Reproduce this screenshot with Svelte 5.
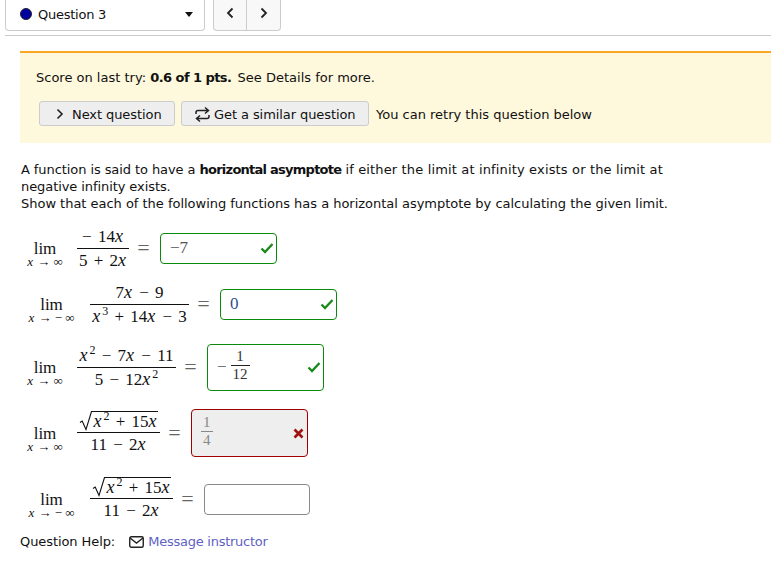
<script>
</script>

{#snippet lim(neg)}
	<div class="lim">
		<span class="lim-word">lim</span>
		<span class="lim-to"><i>x</i> → {#if neg}<span class="neg">−</span> {/if}∞</span>
	</div>
{/snippet}

{#snippet frac(top, bottom)}
	<span class="frac">
		<span class="num">{@render top()}</span>
		<span class="den">{@render bottom()}</span>
	</span>
{/snippet}

{#snippet sqrtTop()}
	<span class="sqrt">
		<svg width="14" height="20" viewBox="0 0 14 20"><path d="M1 11.5 L3.2 10 L7 18.5 L12.5 0.5 L14 0.5" fill="none" stroke="#111" stroke-width="1.1" /></svg>
		<span class="radicand"><i>x</i><sup>2</sup> + 15<i>x</i></span>
	</span>
{/snippet}

{#snippet check()}
	<svg class="mark" width="14" height="12" viewBox="0 0 14 12"><path d="M1.5 6.5 L5 10 L12.5 2" fill="none" stroke="#1c8a1c" stroke-width="2.4" /></svg>
{/snippet}

<div class="page">
	<div class="topbar">
		<div class="select">
			<span class="dot"></span>
			<span class="qname">Question 3</span>
			<span class="caret"></span>
		</div>
		<div class="nav">
			<button class="nav-btn" aria-label="Previous">
				<svg width="8" height="12" viewBox="0 0 8 12"><path d="M6.5 1.5 L2 6 L6.5 10.5" fill="none" stroke="#222" stroke-width="1.8" /></svg>
			</button>
			<button class="nav-btn" aria-label="Next">
				<svg width="8" height="12" viewBox="0 0 8 12"><path d="M1.5 1.5 L6 6 L1.5 10.5" fill="none" stroke="#222" stroke-width="1.8" /></svg>
			</button>
		</div>
	</div>

	<div class="content">
		<div class="notice">
			<p class="score">Score on last try: <b>0.6 of 1 pts.</b> <span class="see">See Details for more.</span></p>
			<div class="actions">
				<button class="btn next">
					<svg width="8" height="12" viewBox="0 0 8 12"><path d="M1.5 1.5 L6 6 L1.5 10.5" fill="none" stroke="#222" stroke-width="1.6" /></svg>
					Next question
				</button>
				<button class="btn similar">
					<svg width="15" height="17" viewBox="0 0 15 17"><path d="M1 8 V6.5 Q1 4.5 3 4.5 H13 M10 1.5 L13.5 4.5 L10 7.5 M14 9 V10.5 Q14 12.5 12 12.5 H2 M5 9.5 L1.5 12.5 L5 15.5" fill="none" stroke="#222" stroke-width="1.5" /></svg>
					Get a similar question
				</button>
				<span class="retry">You can retry this question below</span>
			</div>
		</div>

		<p class="intro">
			A function is said to have a <b>horizontal asymptote</b> <span class="tail">if either the limit at infinity exists or the limit at</span><br />
			negative infinity exists.<br />
			<span class="last">Show that each of the following functions has a horizontal asymptote by calculating the given limit.</span>
		</p>

		<div class="problems">
			<div class="row r1">
				{@render lim(false)}
				{#snippet t1()}− 14<i>x</i>{/snippet}
				{#snippet b1()}5 + 2<i>x</i>{/snippet}
				{@render frac(t1, b1)}
				<span class="eq">=</span>
				<div class="answer ok">
					<span class="val">−7</span>
					{@render check()}
				</div>
			</div>

			<div class="row r2 wide">
				{@render lim(true)}
				{#snippet t2()}7<i>x</i> − 9{/snippet}
				{#snippet b2()}<i>x</i><sup>3</sup> + 14<i>x</i> − 3{/snippet}
				{@render frac(t2, b2)}
				<span class="eq">=</span>
				<div class="answer ok">
					<span class="val blue">0</span>
					{@render check()}
				</div>
			</div>

			<div class="row r3">
				{@render lim(false)}
				{#snippet t3()}<i>x</i><sup>2</sup> − 7<i>x</i> − 11{/snippet}
				{#snippet b3()}5 − 12<i>x</i><sup>2</sup>{/snippet}
				{@render frac(t3, b3)}
				<span class="eq">=</span>
				<div class="answer ok">
					<span class="val minus">−</span>
					<span class="small-frac"><span class="sn">1</span><span>12</span></span>
					{@render check()}
				</div>
			</div>

			<div class="row r4">
				{@render lim(false)}
				{#snippet b4()}11 − 2<i>x</i>{/snippet}
				{@render frac(sqrtTop, b4)}
				<span class="eq">=</span>
				<div class="answer bad">
					<span class="small-frac grey"><span class="sn">1</span><span>4</span></span>
					<svg class="mark" width="11" height="11" viewBox="0 0 11 11"><path d="M1.5 1.5 L9.5 9.5 M9.5 1.5 L1.5 9.5" stroke="#a01010" stroke-width="2.6" /></svg>
				</div>
			</div>

			<div class="row r5 wide">
				{@render lim(true)}
				{#snippet b5()}11 − 2<i>x</i>{/snippet}
				{@render frac(sqrtTop, b5)}
				<span class="eq">=</span>
				<div class="answer empty"></div>
			</div>
		</div>

		<div class="help">
			<span>Question Help:</span>
			<svg width="15" height="12" viewBox="0 0 15 12"><rect x="0.75" y="0.75" width="13.5" height="10.5" rx="1.5" fill="none" stroke="#222" stroke-width="1.4" /><path d="M1 2 L7.5 7 L14 2" fill="none" stroke="#222" stroke-width="1.4" /></svg>
			<span class="link">Message instructor</span>
		</div>
	</div>
</div>

<style>
	:global(body) {
		margin: 0;
		background: #fff;
	}

	.page {
		width: 771px;
		height: 562px;
		overflow: hidden;
		padding-left: 5px;
		box-sizing: border-box;
		font-family: 'DejaVu Sans', sans-serif;
		font-size: 13px;
		letter-spacing: -0.08px;
		color: #111;
	}

	.topbar {
		display: flex;
		gap: 8px;
		height: 35px;
		border-bottom: 1px solid #ccc;
		box-sizing: content-box;
	}

	.select {
		width: 200px;
		height: 31px;
		box-sizing: border-box;
		border: 1px solid #ccc;
		border-top: 0;
		border-radius: 0 0 4px 4px;
		display: flex;
		align-items: center;
		padding: 0 11px 2px 14px;
		gap: 6px;
	}

	.qname {
		letter-spacing: -0.25px;
	}

	.dot {
		width: 12px;
		height: 12px;
		border-radius: 50%;
		background: #00009c;
		border: 0.5px solid #223;
		box-sizing: border-box;
	}

	.caret {
		margin-left: auto;
		width: 0;
		height: 0;
		border-left: 4px solid transparent;
		border-right: 4px solid transparent;
		border-top: 5px solid #111;
	}

	.nav {
		display: flex;
		height: 31px;
	}

	.nav-btn {
		width: 34px;
		height: 31px;
		padding: 0 0 2px;
		background: #f8f8f8;
		border: 1px solid #ccc;
		border-top: 0;
		border-radius: 0 0 0 4px;
	}

	.nav-btn + .nav-btn {
		border-left: 0;
		border-radius: 0 0 4px 0;
	}

	.content {
		padding: 15px 0 0 15px;
	}

	.notice {
		height: 92px;
		box-sizing: border-box;
		background: #fef8dc;
		border-top: 2px solid #f9a825;
		padding: 16px 0 0 16px;
	}

	.score {
		margin: 0 0 15px;
		line-height: 17px;
		letter-spacing: 0;
	}

	.see {
		margin-left: 2px;
	}

	b {
		letter-spacing: -0.55px;
	}

	.actions {
		display: flex;
		align-items: center;
		gap: 6px;
		margin-left: 3px;
		padding-top: 1px;
	}

	.btn {
		height: 25px;
		box-sizing: border-box;
		background: #eee;
		border: 1px solid #ccc;
		border-radius: 3px;
		font: inherit;
		letter-spacing: inherit;
		color: inherit;
		display: flex;
		align-items: center;
		padding: 1px 0 0;
		margin-top: -1px;
	}

	.next {
		width: 136px;
		padding-left: 16px;
		gap: 8px;
	}

	.similar {
		width: 188px;
		padding-left: 13px;
		gap: 4px;
	}

	.retry {
		margin-left: 1px;
		letter-spacing: 0;
	}

	.intro {
		margin: 18px 0 0 1px;
		line-height: 17px;
		white-space: nowrap;
	}

	.intro b {
		letter-spacing: -0.75px;
	}

	.tail {
		letter-spacing: 0.15px;
	}

	.last {
		letter-spacing: -0.02px;
	}

	.problems {
		margin-top: 16px;
		padding-left: 7px;
		display: flex;
		flex-direction: column;
		gap: 15px;
		font-family: 'Liberation Serif', serif;
		font-size: 17px;
		letter-spacing: 0;
		word-spacing: 2px;
	}

	.row {
		display: flex;
		align-items: center;
	}

	i {
		font-size: 18px;
		margin-right: 1px;
	}

	.r1 { height: 40px; }
	.r2 { height: 42px; }
	.r3 { height: 54px; }
	.r4 { height: 48px; }
	.r5 { height: 54px; }

	.lim {
		display: flex;
		flex-direction: column;
		align-items: center;
		width: 36px;
		margin: 13px 14px 0 0;
	}

	.wide .lim {
		width: 49px;
	}

	.lim-word {
		font-size: 17px;
		line-height: 13px;
	}

	.lim-to {
		font-size: 13px;
		line-height: 13px;
		word-spacing: 0;
		white-space: nowrap;
	}

	.lim-to i {
		font-size: 13px;
	}

	.neg {
		margin-right: 3px;
	}

	.frac {
		display: inline-flex;
		flex-direction: column;
		align-items: center;
		white-space: nowrap;
	}

	.r1 .frac { width: 52px; }
	.r2 .frac { width: 99px; }
	.r3 .frac { width: 99px; }
	.r4 .frac { width: 83px; }
	.r5 .frac { width: 83px; }

	.num {
		padding-bottom: 1px;
		line-height: 20px;
		border-bottom: 1px solid #111;
		width: 100%;
		box-sizing: border-box;
		text-align: center;
	}

	.den {
		line-height: 20px;
		padding-top: 1px;
	}

	sup {
		font-size: 12px;
		line-height: 0;
		margin-left: 1px;
	}

	.sqrt {
		display: inline-flex;
		align-items: flex-start;
		justify-content: center;
		vertical-align: top;
	}

	.radicand {
		border-top: 1px solid #111;
		line-height: 19px;
	}

	.eq {
		width: 13px;
		text-align: center;
		margin: 0 10px 0 8px;
		color: #666;
		font-size: 22px;
		line-height: 1;
	}

	.answer {
		width: 117px;
		height: 31px;
		box-sizing: border-box;
		border-radius: 4px;
		display: flex;
		align-items: center;
		padding: 0 2px 0 9px;
		background: #fff;
	}

	.r3 .answer {
		height: 47px;
	}

	.ok {
		border: 1px solid #0a8a0a;
	}

	.bad {
		border: 1px solid #a00000;
		background: #eee;
		padding: 0 3px 0 10px;
	}

	.r4 .answer {
		height: 48px;
	}

	.empty {
		width: 106px;
		border: 1px solid #888;
	}

	.val {
		color: #555;
		font-size: 17px;
	}

	.blue {
		color: #2f4f8f;
	}

	.minus {
		margin-right: 4px;
	}

	.small-frac {
		display: inline-flex;
		flex-direction: column;
		align-items: center;
		font-size: 15px;
		line-height: 17px;
		color: #333;
		padding: 0 2px 3px;
	}

	.small-frac.grey {
		color: #888;
		margin-left: -1px;
	}

	.sn {
		border-bottom: 1px solid #222;
		width: calc(100% + 4px);
		text-align: center;
	}

	.grey .sn {
		border-bottom-color: #888;
	}

	.mark {
		margin-left: auto;
	}

	.help {
		display: flex;
		align-items: center;
		gap: 6px;
		margin-top: 7px;
		line-height: 17px;
	}

	.help svg {
		margin-left: 8px;
	}

	.link {
		color: #5f5fc4;
		margin-left: -2px;
		letter-spacing: -0.25px;
	}
</style>
